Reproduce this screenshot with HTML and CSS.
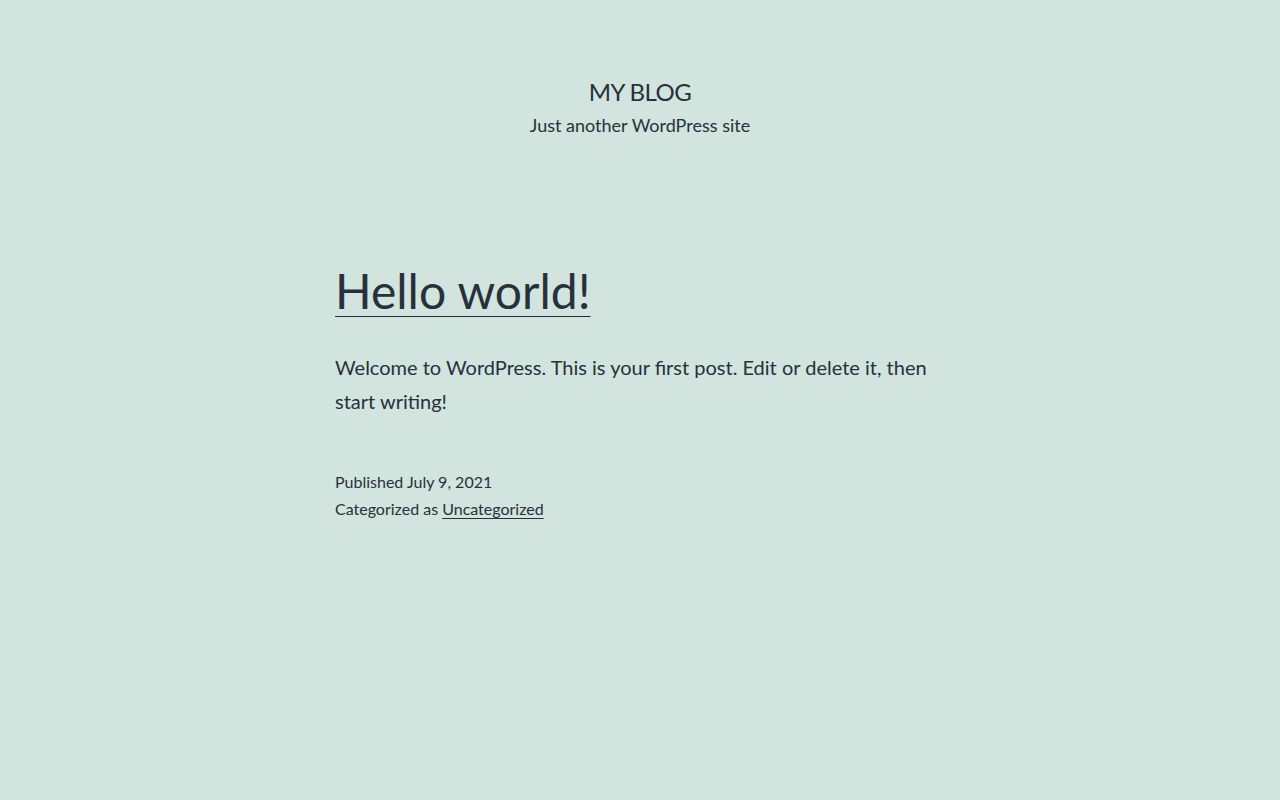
FILE: index.html
```html
<!DOCTYPE html>
<html lang="en">
<head>
<meta charset="utf-8">
<title>My Blog</title>
<link rel="stylesheet" href="styles.css">
</head>
<body>
<header class="site-header">
  <p class="site-title"><a href="#">My Blog</a></p>
  <p class="site-description">Just another WordPress site</p>
</header>
<main class="site-main">
  <article class="post">
    <h2 class="entry-title"><a href="#">Hello world!</a></h2>
    <div class="entry-content">
      <p>Welcome to WordPress. This is your first post. Edit or delete it, then start writing!</p>
    </div>
    <footer class="entry-footer">
      <div class="meta-line">Published July 9, 2021</div>
      <div class="meta-line">Categorized as <a href="#" class="cat-link">Uncategorized</a></div>
    </footer>
  </article>
</main>
</body>
</html>
```
FILE: styles.css
```css
html, body {
  margin: 0;
  padding: 0;
}
body {
  background: #d1e4dd;
  color: #28303d;
  font-family: Lato, "Liberation Sans", sans-serif;
  min-height: 800px;
}
a {
  color: #28303d;
}
.site-header {
  display: flex;
  flex-direction: column;
  align-items: center;
  padding-top: 76px;
}
.site-title {
  margin: 0;
  font-size: 24px;
  line-height: 32px;
  text-transform: uppercase;
  letter-spacing: -0.5px;
}
.site-title a {
  text-decoration: none;
}
.site-description {
  margin: 4px 0 0;
  font-size: 18px;
  line-height: 26px;
}
.site-main {
  width: 610px;
  margin: 0 auto;
  padding-top: 122px;
}
.entry-title {
  margin: 0;
  font-size: 48px;
  line-height: 62px;
  font-weight: 400;
}
.entry-title a {
  text-decoration: underline;
  text-decoration-thickness: 1px;
  text-underline-offset: 7px;
}
.entry-content p {
  margin: 28px 0 0;
  font-size: 20px;
  line-height: 34px;
}
.entry-footer {
  margin-top: 50px;
  font-size: 16px;
  line-height: 27px;
}
.cat-link {
  text-decoration: underline;
  text-decoration-thickness: 1px;
  text-underline-offset: 3px;
}
```
